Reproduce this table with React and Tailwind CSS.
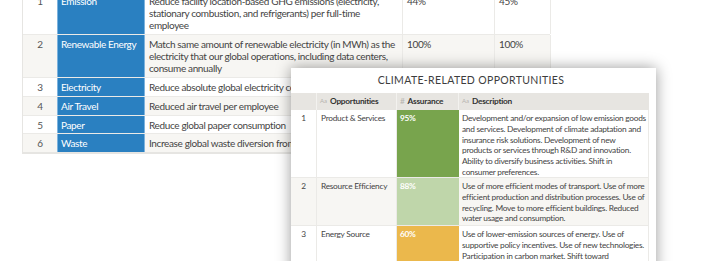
const goals = [
  {
    n: 1,
    name: 'Emission',
    desc: 'Reduce facility location-based GHG emissions (electricity, stationary combustion, and refrigerants) per full-time employee',
    a: '44%',
    b: '45%',
    h: 'h-[43px]',
  },
  {
    n: 2,
    name: 'Renewable Energy',
    desc: 'Match same amount of renewable electricity (in MWh) as the electricity that our global operations, including data centers, consume annually',
    a: '100%',
    b: '100%',
    h: 'h-[43px]',
  },
  { n: 3, name: 'Electricity', desc: 'Reduce absolute global electricity consumption', a: '20%', b: '25%', h: 'h-[19px]' },
  { n: 4, name: 'Air Travel', desc: 'Reduced air travel per employee', a: '10%', b: '15%', h: 'h-[19px]' },
  { n: 5, name: 'Paper', desc: 'Reduce global paper consumption', a: '30%', b: '35%', h: 'h-[18px]' },
  { n: 6, name: 'Waste', desc: 'Increase global waste diversion from landfill', a: '70%', b: '75%', h: 'h-[19px]' },
]

const opps = [
  {
    n: 1,
    name: 'Product & Services',
    pct: '95%',
    color: 'bg-[#78a44d]',
    desc: 'Development and/or expansion of low emission goods and services. Development of climate adaptation and insurance risk solutions. Development of new products or services through R&D and innovation. Ability to diversify business activities. Shift in consumer preferences.',
    row: 'bg-white h-[68px]',
  },
  {
    n: 2,
    name: 'Resource Efficiency',
    pct: '88%',
    color: 'bg-[#bfd6aa]',
    desc: 'Use of more efficient modes of transport. Use of more efficient production and distribution processes. Use of recycling. Move to more efficient buildings. Reduced water usage and consumption.',
    row: 'bg-[#f7f6f3] h-[48px]',
  },
  {
    n: 3,
    name: 'Energy Source',
    pct: '60%',
    color: 'bg-[#ebb84c]',
    desc: 'Use of lower-emission sources of energy. Use of supportive policy incentives. Use of new technologies. Participation in carbon market. Shift toward decentralized energy generation.',
    row: 'bg-white h-[60px]',
  },
]

function Aa() {
  return <span className="mr-[3px] text-[6px] font-normal tracking-normal text-[#b5b3ae]">Aa</span>
}

export default function App() {
  return (
    <div className="relative h-[261px] w-[714px] overflow-hidden bg-white font-['Lato',sans-serif]">
      <div className="ml-[22px] mt-[-9px] w-[528px] border-b-2 border-l border-[#e6e5e2] text-[10px] leading-[12px] tracking-[-0.36px] text-[#444]">
        {goals.map((g, i) => (
          <div key={g.n} className={`flex ${g.h} ${i % 2 ? 'bg-[#f7f6f3]' : 'bg-white'} border-t border-[#ebeae7]`}>
            <div className="w-[34px] shrink-0 pt-[3px] text-center text-[#555]">{g.n}</div>
            <div className="w-[88px] shrink-0 border-x border-[#7db3de] bg-[#2a80c1] pl-[3px] pt-[3px] text-white">{g.name}</div>
            <div className="w-[258px] shrink-0 border-r border-[#ebeae7] px-[4px] pt-[3px]">{g.desc}</div>
            <div className="w-[92px] shrink-0 border-r border-[#ebeae7] px-[4px] pt-[3px]">{g.a}</div>
            <div className="w-[56px] shrink-0 border-r border-[#ebeae7] px-[4px] pt-[3px]">{g.b}</div>
          </div>
        ))}
      </div>

      <div className="absolute left-[291px] top-[68px] w-[365px] bg-white pb-[20px] pr-[7px] shadow-[0_0_14px_rgba(0,0,0,0.4)]">
        <div className="flex h-[25px] items-center justify-center pl-[2px] text-[10.5px] tracking-[0.35px] text-[#3d3d3d]">
          CLIMATE-RELATED OPPORTUNITIES
        </div>
        <div className="text-[8.3px] leading-[10.8px] tracking-[-0.26px] text-[#444]">
          <div className="flex h-[17px] items-center bg-[#e7e5e1] font-bold text-[#333]">
            <div className="h-full w-[26px] shrink-0 border-r border-[#f3f2ef]" />
            <div className="flex h-full w-[80px] shrink-0 items-center border-r border-[#f3f2ef] pl-[3px]">
              <Aa />
              Opportunities
            </div>
            <div className="flex h-full w-[62px] shrink-0 items-center border-r border-[#f3f2ef] pl-[3px]">
              <span className="mr-[3px] font-normal text-[#b5b3ae]">#</span>
              Assurance
            </div>
            <div className="flex h-full flex-1 items-center pl-[3px]">
              <Aa />
              Description
            </div>
          </div>
          {opps.map((o) => (
            <div key={o.n} className={`flex overflow-hidden border-b border-[#ebeae7] ${o.row}`}>
              <div className="w-[26px] shrink-0 border-r border-[#ebeae7] pt-[3px] text-center">{o.n}</div>
              <div className="w-[80px] shrink-0 border-r border-[#ebeae7] pl-[4px] pt-[3px]">{o.name}</div>
              <div className={`w-[62px] shrink-0 pl-[3px] pt-[3px] font-bold text-white ${o.color}`}>{o.pct}</div>
              <div className="flex-1 border-r border-[#ebeae7] pl-[3px] pr-[2px] pt-[3px]">{o.desc}</div>
            </div>
          ))}
        </div>
      </div>
    </div>
  )
}
